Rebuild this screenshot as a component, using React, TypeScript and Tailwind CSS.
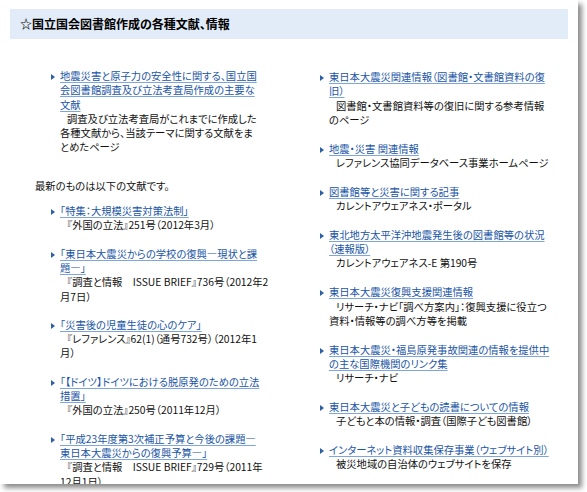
import React from 'react'

type Entry = { title: string[]; desc: string[] }

const topEntry: Entry = {
  title: ['地震災害と原子力の安全性に関する、国立国', '会図書館調査及び立法考査局作成の主要な', '文献'],
  desc: ['調査及び立法考査局がこれまでに作成した', '各種文献から、当該テーマに関する文献をま', 'とめたページ'],
}

const latest: Entry[] = [
  { title: ['「特集：大規模災害対策法制」'], desc: ['『外国の立法』251号（2012年3月）'] },
  {
    title: ['「東日本大震災からの学校の復興―現状と課', '題―」'],
    desc: ['『調査と情報　ISSUE BRIEF』736号（2012年2', '月7日）'],
  },
  { title: ['「災害後の児童生徒の心のケア」'], desc: ['『レファレンス』62(1)（通号732号）（2012年1', '月）'] },
  { title: ['「【ドイツ】ドイツにおける脱原発のための立法', '措置」'], desc: ['『外国の立法』250号（2011年12月）'] },
  {
    title: ['「平成23年度第3次補正予算と今後の課題―', '東日本大震災からの復興予算―」'],
    desc: ['『調査と情報　ISSUE BRIEF』729号（2011年', '12月1日）'],
  },
]

const related: Entry[] = [
  { title: ['東日本大震災関連情報（図書館・文書館資料の復', '旧）'], desc: ['図書館・文書館資料等の復旧に関する参考情報', 'のページ'] },
  { title: ['地震・災害 関連情報'], desc: ['レファレンス協同データベース事業ホームページ'] },
  { title: ['図書館等と災害に関する記事'], desc: ['カレントアウェアネス・ポータル'] },
  { title: ['東北地方太平洋沖地震発生後の図書館等の状況', '（速報版）'], desc: ['カレントアウェアネス-E 第190号'] },
  { title: ['東日本大震災復興支援関連情報'], desc: ['リサーチ・ナビ「調べ方案内」：復興支援に役立つ', '資料・情報等の調べ方等を掲載'] },
  { title: ['東日本大震災・福島原発事故関連の情報を提供中', 'の主な国際機関のリンク集'], desc: ['リサーチ・ナビ'] },
  { title: ['東日本大震災と子どもの読書についての情報'], desc: ['子どもと本の情報・調査（国際子ども図書館）'] },
  { title: ['インターネット資料収集保存事業（ウェブサイト別）'], desc: ['被災地域の自治体のウェブサイトを保存'] },
]

function Lines({ lines }: { lines: string[] }) {
  return (
    <>
      {lines.map((l, i) => (
        <React.Fragment key={i}>
          {i > 0 && <br />}
          {l}
        </React.Fragment>
      ))}
    </>
  )
}

function Item({ entry }: { entry: Entry }) {
  return (
    <li className="flex">
      <span className="mt-[5px] mr-[5px] h-0 w-0 shrink-0 border-y-[3px] border-l-[4px] border-y-transparent border-l-[#2c5fa6]" />
      <div className="whitespace-nowrap">
        <a href="#" className="text-[#1a55a6] underline decoration-[#7fa6dc] underline-offset-[2px]">
          <Lines lines={entry.title} />
        </a>
        <p className="indent-[7px] text-[#111]">
          <Lines lines={entry.desc} />
        </p>
      </div>
    </li>
  )
}

export default function App() {
  return (
    <div className="h-[492px] w-[587px] overflow-hidden bg-white">
      <div
        className="h-[484px] w-[578px] overflow-hidden bg-white text-[10.3px] leading-[14.3px] shadow-[4px_4px_5px_rgba(0,0,0,0.45)] [font-family:'Noto_Sans_CJK_JP','Liberation_Sans',sans-serif] [font-feature-settings:'palt']"
      >
        {/* Heading bar */}
        <div className="px-[10px] pt-[9px]">
          <h2 className="flex h-[30px] items-center bg-[#e1ecf8] pl-[10px] text-[12px] font-bold text-black">
            ☆国立国会図書館作成の各種文献、情報
          </h2>
        </div>

        <div className="mt-[30px] flex">
          {/* Left column */}
          <div className="w-[320px] shrink-0 pl-[35px]">
            <ul className="ml-[16px]">
              <Item entry={topEntry} />
            </ul>
            <p className="mt-[24px] text-[#111]">最新のものは以下の文献です。</p>
            <ul className="mt-[11px] ml-[16px] flex flex-col gap-[14px]">
              {latest.map((e, i) => (
                <Item key={i} entry={e} />
              ))}
            </ul>
          </div>

          {/* Right column */}
          <ul className="flex flex-col gap-[14.5px] pt-[1px]">
            {related.map((e, i) => (
              <Item key={i} entry={e} />
            ))}
          </ul>
        </div>
      </div>
    </div>
  )
}
